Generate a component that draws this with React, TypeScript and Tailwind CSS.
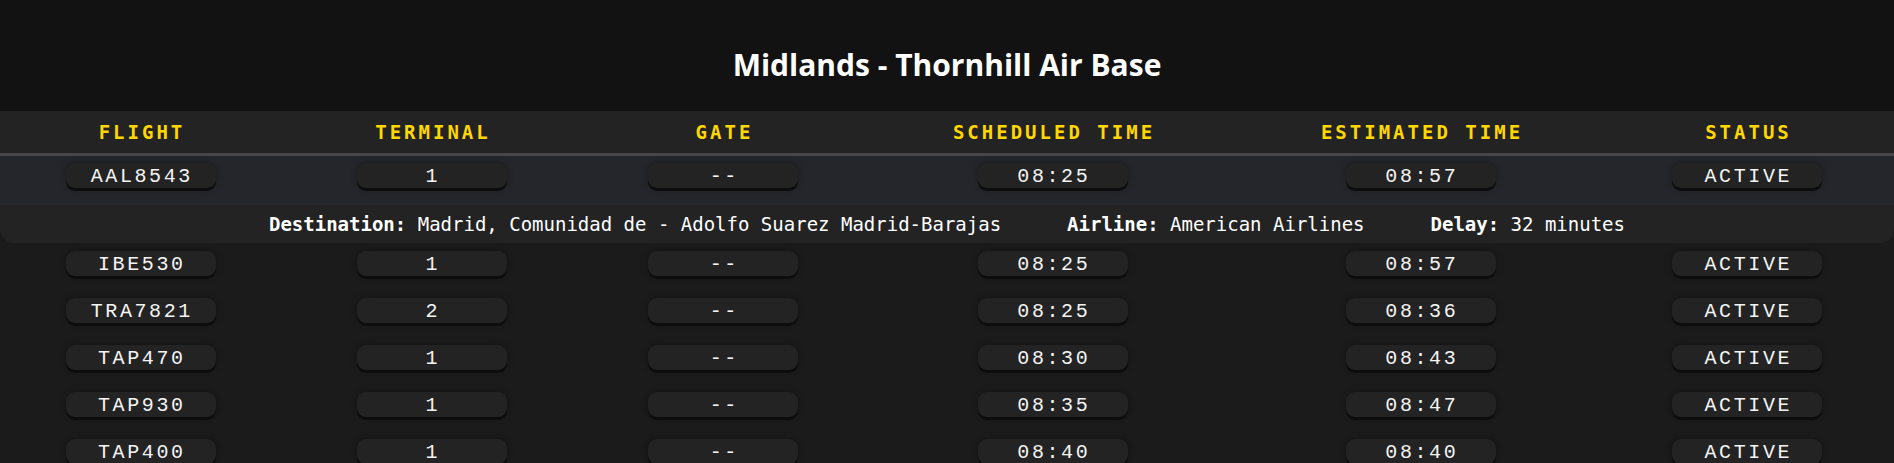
const flights = [
  { flight: "AAL8543", terminal: "1", gate: "--", scheduled: "08:25", estimated: "08:57", status: "ACTIVE" },
  { flight: "IBE530", terminal: "1", gate: "--", scheduled: "08:25", estimated: "08:57", status: "ACTIVE" },
  { flight: "TRA7821", terminal: "2", gate: "--", scheduled: "08:25", estimated: "08:36", status: "ACTIVE" },
  { flight: "TAP470", terminal: "1", gate: "--", scheduled: "08:30", estimated: "08:43", status: "ACTIVE" },
  { flight: "TAP930", terminal: "1", gate: "--", scheduled: "08:35", estimated: "08:47", status: "ACTIVE" },
  { flight: "TAP400", terminal: "1", gate: "--", scheduled: "08:40", estimated: "08:40", status: "ACTIVE" },
];

const headers = ["FLIGHT", "TERMINAL", "GATE", "SCHEDULED TIME", "ESTIMATED TIME", "STATUS"];

const gridCols = "grid grid-cols-[281px_301px_282px_377px_359px_1fr]";

function Pill({ children }: { children: string }) {
  return (
    <div className="w-[150px] h-[25px] rounded-[9px] bg-[#232323] shadow-[0_3px_0_#0d0d0d,0_0_6px_rgba(0,0,0,0.35)] flex items-center justify-center pt-[2px] font-['Liberation_Mono',monospace] text-[20px] tracking-[2.6px] pl-[2.6px] text-[#f4f4f4] leading-none">
      {children}
    </div>
  );
}

function FlightRow({ f, selected }: { f: (typeof flights)[number]; selected?: boolean }) {
  const cells = [f.flight, f.terminal, f.gate, f.scheduled, f.estimated, f.status];
  return (
    <div className={`${gridCols} ${selected ? "h-[49px] pt-[7px] bg-[#25262b]" : "h-[47px] pt-[8px]"}`}>
      {cells.map((c, i) => (
        <div key={i} className="flex justify-center">
          <Pill>{c}</Pill>
        </div>
      ))}
    </div>
  );
}

export default function App() {
  const [first, ...rest] = flights;
  return (
    <div className="min-h-screen bg-[#1b1b1c] text-white">
      <header className="h-[111px] bg-[#121212] flex items-start justify-center pt-[45px]">
        <h1 className="font-['Open_Sans',sans-serif] font-bold text-[30px] leading-[40px] text-white">
          Midlands - Thornhill Air Base
        </h1>
      </header>

      <div className={`${gridCols} h-[42px] items-center bg-[#232323] border-b-[3px] border-[#474747] box-content`}>
        {headers.map((h) => (
          <div
            key={h}
            className="text-center font-['DejaVu_Sans_Mono',monospace] font-bold text-[19px] tracking-[3px] pl-[3px] text-[#ffd700]"
          >
            {h}
          </div>
        ))}
      </div>

      <FlightRow f={first} selected />
      <div className="h-[38px] bg-[#232323] rounded-b-[14px] flex items-center justify-center gap-[66px] font-['DejaVu_Sans_Mono',monospace] text-[19px] text-white">
        <span>
          <b>Destination:</b> Madrid, Comunidad de - Adolfo Suarez Madrid-Barajas
        </span>
        <span>
          <b>Airline:</b> American Airlines
        </span>
        <span>
          <b>Delay:</b> 32 minutes
        </span>
      </div>

      {rest.map((f) => (
        <FlightRow key={f.flight} f={f} />
      ))}
    </div>
  );
}
